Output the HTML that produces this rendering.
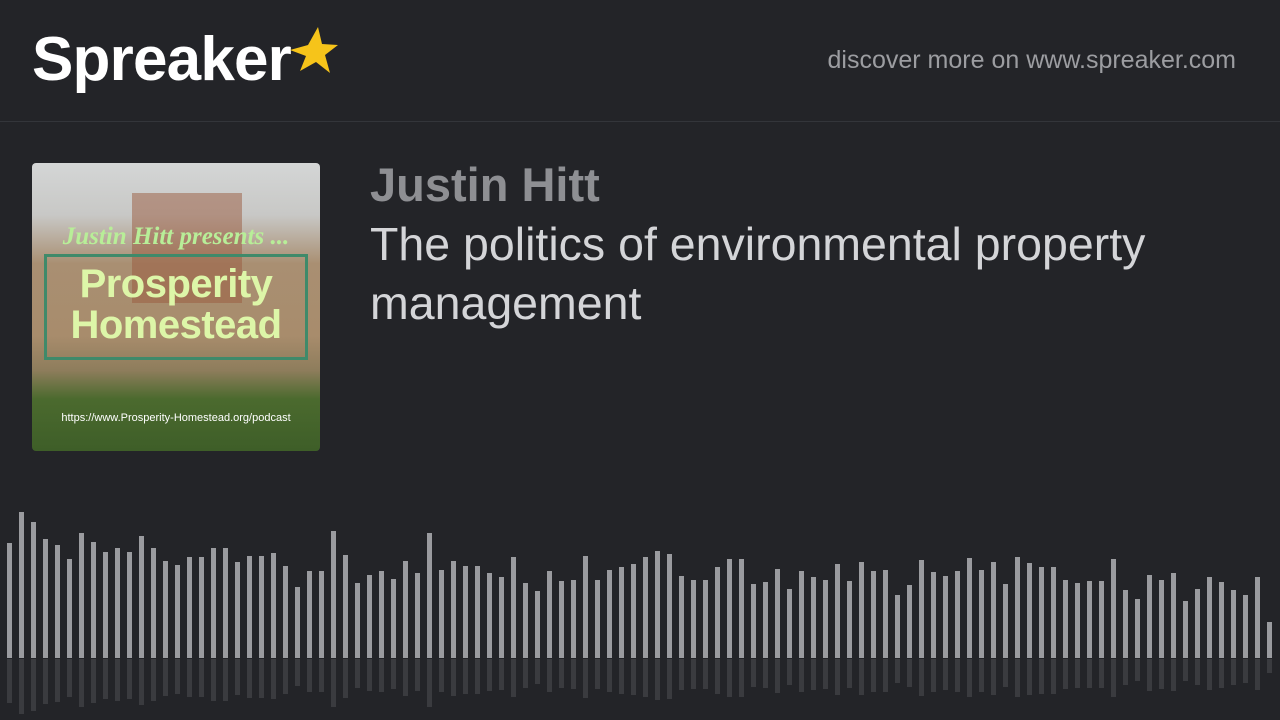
<!DOCTYPE html>
<html><head><meta charset="utf-8"><style>
*{margin:0;padding:0;box-sizing:border-box}
body{width:1280px;height:720px;background:#232428;overflow:hidden;position:relative;font-family:"Liberation Sans",sans-serif}
.logo{position:absolute;left:32px;top:24px;color:#fff;font-size:62px;font-weight:bold;letter-spacing:-0.8px}
.disc{position:absolute;right:44px;top:46px;color:#9c9da1;font-size:25px}
.line{position:absolute;left:0;top:121px;width:1280px;height:1px;background:#33353a}
.art{position:absolute;left:32px;top:163px;width:288px;height:288px;border-radius:4px;overflow:hidden;
background:linear-gradient(180deg,#d4d6d6 0%,#c8c8c6 18%,#a98f72 35%,#a88c6c 60%,#8e7d5c 72%,#4b6a2e 82%,#3e5e28 100%)}
.author{position:absolute;left:370px;top:157px;color:#8e8f93;font-size:47px;font-weight:bold}
.title{position:absolute;left:370px;top:215px;width:880px;color:#d4d5d8;font-size:46.5px;line-height:59px}
.bar{position:absolute;width:5px;background:#9a9b9f}
.ref{position:absolute;width:5px;background:#3a3b3f}
</style></head><body>
<div class="logo">Spreaker</div>
<svg style="position:absolute;left:288px;top:25px" width="52" height="52" viewBox="0 0 52 52"><polygon points="30,2 34,19 50,20 37,30 42,48 28,37 12,46 18,31 2,25 20,20" fill="#f6c41a"/></svg>
<div class="disc">discover more on www.spreaker.com</div>
<div class="line"></div>
<div class="art">
<div style="position:absolute;left:100px;top:30px;width:110px;height:110px;background:#9a5a3e;opacity:.5"></div>
<div style="position:absolute;left:0;top:60px;width:288px;text-align:center;color:#b8ee98;font-family:'Liberation Serif',serif;font-style:italic;font-weight:bold;font-size:25px">Justin Hitt presents ...</div>
<div style="position:absolute;left:12px;top:91px;width:264px;height:106px;border:3px solid #3f8a6a"></div>
<div style="position:absolute;left:0;top:101px;width:288px;text-align:center;color:#ddf6a8;font-weight:bold;font-size:40px;line-height:41px;letter-spacing:-0.5px">Prosperity<br>Homestead</div>
<div style="position:absolute;left:0;top:249px;width:288px;text-align:center;color:#fff;font-size:11px">https://www.Prosperity-Homestead.org/podcast</div>
</div>
<div class="author">Justin Hitt</div>
<div class="title">The politics of environmental property management</div>
<div id="w"></div>
<script>
var t=[543,512,522,539,545,559,533,542,552,548,552,536,548,561,565,557,557,548,548,562,556,556,553,566,587,571,571,531,555,583,575,571,579,561,573,533,570,561,566,566,573,577,557,583,591,571,581,580,556,580,570,567,564,557,551,554,576,580,580,567,559,559,584,582,569,589,571,577,580,564,581,562,571,570,595,585,560,572,576,571,558,570,562,584,557,563,567,567,580,583,581,581,559,590,599,575,580,573,601,589,577,582,590,595,577,622];
var h='';for(var i=0;i<t.length;i++){var x=7+i*12,H=658-t[i];h+='<div class="bar" style="left:'+x+'px;top:'+t[i]+'px;height:'+H+'px"></div><div class="ref" style="left:'+x+'px;top:659px;height:'+Math.round(H*0.38)+'px"></div>';}
document.getElementById('w').innerHTML=h;
</script>
</body></html>
